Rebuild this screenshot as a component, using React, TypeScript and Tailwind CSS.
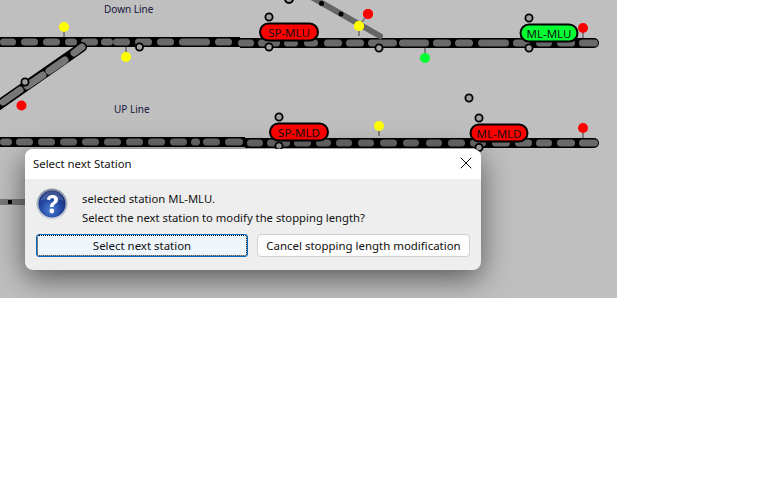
import React from 'react';
import { X } from 'lucide-react';

type Seg = [number, number];

const upperLeft: Seg[] = [[0, 16], [21, 38], [43, 60], [65, 77], [81, 98], [101, 113], [113, 130], [135, 152], [157, 174], [179, 210], [215, 232]];
const upperRight: Seg[] = [[238, 254], [258, 280], [284, 298], [304, 318], [324, 342], [346, 364], [368, 397], [399, 429], [433, 451], [455, 473], [478, 509], [513, 530], [536, 552], [557, 575], [579, 598]];
const lowerLeft: Seg[] = [[0, 12], [16, 33], [38, 55], [60, 77], [82, 99], [104, 121], [126, 143], [148, 165], [170, 187], [193, 198], [203, 220], [225, 243]];
const lowerRight: Seg[] = [[247, 263], [267, 290], [294, 311], [316, 331], [336, 352], [358, 374], [380, 397], [403, 419], [426, 442], [448, 465], [470, 486], [492, 510], [515, 532], [536, 552], [557, 575], [579, 598]];

const rings: Seg[] = [[139.5, 47], [25, 82], [269, 17], [269, 47], [379, 48], [529, 18], [529, 48], [279, 117], [469, 98], [479, 118], [279, 146], [479, 147.5]];

const signals: { x: number; y: number; fill: string; stemTo?: number }[] = [
  { x: 64, y: 27, fill: '#ffff00', stemTo: 37 },
  { x: 126, y: 57, fill: '#ffff00', stemTo: 47 },
  { x: 21.5, y: 105.5, fill: '#ff0000' },
  { x: 368, y: 14, fill: '#ff0000' },
  { x: 359, y: 26, fill: '#ffff00', stemTo: 36 },
  { x: 425, y: 58, fill: '#00ff33', stemTo: 48 },
  { x: 583, y: 28, fill: '#ff0000', stemTo: 38 },
  { x: 379, y: 126, fill: '#ffff00', stemTo: 136 },
  { x: 583, y: 128, fill: '#ff0000', stemTo: 138 },
];

const pills: { x: number; y: number; w: number; fill: string; label: string }[] = [
  { x: 260, y: 23.5, w: 58, fill: '#ff0000', label: 'SP-MLU' },
  { x: 520.5, y: 24.5, w: 57, fill: '#00ff33', label: 'ML-MLU' },
  { x: 270, y: 123.5, w: 58, fill: '#ff0000', label: 'SP-MLD' },
  { x: 470.5, y: 124.5, w: 57, fill: '#ff0000', label: 'ML-MLD' },
];

const Dashes = ({ segs, y }: { segs: Seg[]; y: number }) => (
  <g>
    {segs.map(([a, b]) => (
      <line key={a} x1={a + 3.5} y1={y} x2={b - 3.5} y2={y} stroke="#696969" strokeWidth={7} strokeLinecap="round" />
    ))}
  </g>
);

const TrackDiagram = () => (
  <svg width={617} height={298} viewBox="0 0 617 298" className="block">
    {/* track beds: the right half sits one pixel lower than the left */}
    <line x1={0} y1={142} x2={245} y2={142} stroke="#000" strokeWidth={10} />
    <line x1={245} y1={143} x2={594} y2={143} stroke="#000" strokeWidth={10} />
    <circle cx={594} cy={143} r={5} fill="#000" />
    <line x1={0} y1={42} x2={240} y2={42} stroke="#000" strokeWidth={10} />
    <line x1={240} y1={43} x2={594} y2={43} stroke="#000" strokeWidth={10} />
    <circle cx={594} cy={43} r={5} fill="#000" />

    <Dashes segs={lowerLeft} y={142} />
    <Dashes segs={lowerRight} y={143} />
    <Dashes segs={upperLeft} y={42} />
    <Dashes segs={upperRight} y={43} />

    {/* left crossover */}
    <line x1={82} y1={47} x2={-4} y2={107} stroke="#000" strokeWidth={10} strokeLinecap="round" />
    {[[82, 47, 74, 53], [65, 60, 49, 71], [43, 75, 27, 86], [20, 90, 3, 102]].map(([a, b, c, d]) => (
      <line key={a} x1={a} y1={b} x2={c} y2={d} stroke="#777" strokeWidth={7} strokeLinecap="round" />
    ))}

    {/* upper crossover, shown already cleared */}
    <line x1={313} y1={-2} x2={380} y2={36} stroke="#666" strokeWidth={6} strokeLinecap="round" />
    <circle cx={321.5} cy={3.5} r={2.5} fill="#000" />
    <circle cx={341} cy={14} r={2.5} fill="#000" />
    <circle cx={289} cy={-1} r={4} fill="#aaa" stroke="#000" strokeWidth={2} />

    {/* short stub behind the dialog */}
    <line x1={0} y1={202} x2={25} y2={202} stroke="#777" strokeWidth={6} />
    <rect x={8} y={200} width={4} height={4} fill="#000" />

    {signals.map((s) => (
      <g key={`${s.x}-${s.y}`}>
        {s.stemTo !== undefined && <line x1={s.x} y1={s.y} x2={s.x} y2={s.stemTo} stroke="#808080" strokeWidth={2} />}
        <circle cx={s.x} cy={s.y} r={5} fill={s.fill} />
      </g>
    ))}
    <line x1={368} y1={14} x2={359} y2={26} stroke="#808080" strokeWidth={2} />
    <circle cx={368} cy={14} r={5} fill="#ff0000" />
    <circle cx={359} cy={26} r={5} fill="#ffff00" />

    {pills.map((p) => (
      <g key={p.label}>
        <rect x={p.x} y={p.y} width={p.w} height={17} rx={8.5} fill={p.fill} stroke="#000" strokeWidth={2} />
        <text x={p.x + p.w / 2} y={p.y + 13} textAnchor="middle" fontSize={11.5} fill="#111" fontFamily="'Noto Sans', sans-serif">
          {p.label}
        </text>
      </g>
    ))}

    {rings.map(([x, y]) => (
      <circle key={`${x}-${y}`} cx={x} cy={y} r={3.6} fill="#a0a0a0" stroke="#000" strokeWidth={1.8} />
    ))}
  </svg>
);

const QuestionIcon = () => (
  <svg width={32} height={32} viewBox="0 0 32 32" className="shrink-0 -mt-[1px]">
    <defs>
      <radialGradient id="orb" cx="45%" cy="70%" r="70%">
        <stop offset="0%" stopColor="#4f7fd6" />
        <stop offset="55%" stopColor="#23479f" />
        <stop offset="100%" stopColor="#142a6e" />
      </radialGradient>
      <linearGradient id="rim" x1="0" y1="0" x2="0" y2="1">
        <stop offset="0%" stopColor="#8b93a3" />
        <stop offset="100%" stopColor="#d4d8e0" />
      </linearGradient>
    </defs>
    <circle cx={16} cy={16} r={15.5} fill="url(#rim)" />
    <circle cx={16} cy={16} r={13.6} fill="url(#orb)" />
    <path d="M4.5 13 C6 6 11 3 16 3 C21 3 26 6 27.5 13 C22 9.5 10 9.5 4.5 13 Z" fill="#fff" opacity={0.16} />
    <path
      d="M10.8 11.6 C11.4 8.4 13.8 7 16.4 7 C19.6 7 22 8.8 22 11.7 C22 14.2 20.4 15.2 18.9 16.2 C17.9 16.9 17.6 17.5 17.6 19 L14 19 C14 16.6 14.6 15.5 16.2 14.4 C17.5 13.5 18.1 13 18.1 11.9 C18.1 10.8 17.4 10.1 16.2 10.1 C15 10.1 14.3 10.9 14.1 12.2 Z"
      fill="#fff"
    />
    <circle cx={15.8} cy={23} r={2.4} fill="#fff" />
  </svg>
);

export default function App() {
  return (
    <div className="min-h-[503px] bg-white font-['Noto_Sans',sans-serif]">
      <div className="relative w-[617px] h-[298px] bg-[#bfbfbf] overflow-hidden">
        <TrackDiagram />
        <span className="absolute left-[104px] top-[1px] text-[10px] leading-[16px] text-[#14143c]">Down Line</span>
        <span className="absolute left-[114px] top-[101px] text-[10px] leading-[16px] text-[#14143c]">UP Line</span>

        <div className="absolute left-[25px] top-[149px] w-[456px] h-[121px] rounded-lg overflow-hidden bg-[#eeeeee] shadow-[0_8px_30px_rgba(0,0,0,0.55)] flex flex-col">
          <div className="h-[30px] bg-white flex items-center justify-between pl-2 pr-[5px]">
            <span className="text-[11.4px] text-[#111]">Select next Station</span>
            <X size={20} strokeWidth={1.2} color="#111" className="mb-[2px]" />
          </div>
          <div className="flex-1 px-[11px] flex flex-col">
            <div className="flex gap-[14px] pt-[10px]">
              <QuestionIcon />
              <div className="text-[11.27px] leading-[19px] text-[#111]">
                <div>selected station ML-MLU.</div>
                <div>Select the next station to modify the stopping length?</div>
              </div>
            </div>
            <div className="flex gap-[9px] mt-[7px]">
              <button className="w-[212px] h-[23px] rounded-[3px] bg-[#eef5fb] border border-[#0067c0] outline-1 outline-dotted outline-black -outline-offset-2 text-[11.45px] leading-none text-[#111]">
                Select next station
              </button>
              <button className="w-[213px] h-[23px] rounded-[4px] bg-[#fdfdfd] border border-[#d0d0d0] text-[11.45px] leading-none text-[#111]">
                Cancel stopping length modification
              </button>
            </div>
          </div>
        </div>
      </div>
    </div>
  );
}
